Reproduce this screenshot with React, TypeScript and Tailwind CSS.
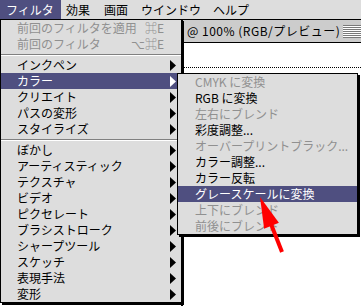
import React from 'react'

type Item =
  | { kind: 'sep' }
  | { kind: 'item'; label: string; disabled?: boolean; active?: boolean; sub?: boolean; key?: string }

const filterMenu: Item[] = [
  { kind: 'item', label: '前回のフィルタを適用', disabled: true, key: '⌘E' },
  { kind: 'item', label: '前回のフィルタ', disabled: true, key: '⌥⌘E' },
  { kind: 'sep' },
  { kind: 'item', label: 'インクペン', sub: true },
  { kind: 'item', label: 'カラー', sub: true, active: true },
  { kind: 'item', label: 'クリエイト', sub: true },
  { kind: 'item', label: 'パスの変形', sub: true },
  { kind: 'item', label: 'スタイライズ', sub: true },
  { kind: 'sep' },
  { kind: 'item', label: 'ぼかし', sub: true },
  { kind: 'item', label: 'アーティスティック', sub: true },
  { kind: 'item', label: 'テクスチャ', sub: true },
  { kind: 'item', label: 'ビデオ', sub: true },
  { kind: 'item', label: 'ピクセレート', sub: true },
  { kind: 'item', label: 'ブラシストローク', sub: true },
  { kind: 'item', label: 'シャープツール', sub: true },
  { kind: 'item', label: 'スケッチ', sub: true },
  { kind: 'item', label: '表現手法', sub: true },
  { kind: 'item', label: '変形', sub: true },
]

const colorMenu: Item[] = [
  { kind: 'item', label: 'CMYK に変換', disabled: true },
  { kind: 'item', label: 'RGB に変換' },
  { kind: 'item', label: '左右にブレンド', disabled: true },
  { kind: 'item', label: '彩度調整...' },
  { kind: 'item', label: 'オーバープリントブラック...', disabled: true },
  { kind: 'item', label: 'カラー調整...' },
  { kind: 'item', label: 'カラー反転' },
  { kind: 'item', label: 'グレースケールに変換', active: true },
  { kind: 'item', label: '上下にブレンド', disabled: true },
  { kind: 'item', label: '前後にブレンド', disabled: true },
]

function Arrow({ white }: { white?: boolean }) {
  return (
    <svg width="6" height="11" viewBox="0 0 6 11" className="ml-auto mr-[5px] shrink-0">
      <polygon points="0,0 6,5.5 0,11" fill={white ? '#fff' : '#000'} />
    </svg>
  )
}

function MenuRows({ items, pad }: { items: Item[]; pad: string }) {
  return (
    <>
      {items.map((it, i) => {
        if (it.kind === 'sep') {
          return (
            <div key={i} className="flex h-[5px] flex-col justify-center">
              <div className="h-px bg-[#808080]" />
              <div className="h-px bg-white" />
            </div>
          )
        }
        const color = it.active ? 'bg-[#4f4f80] text-white' : it.disabled ? 'text-[#909090]' : 'text-black'
        return (
          <div key={i} className={`flex h-[16px] items-center whitespace-nowrap ${pad} ${color}`}>
            <span>{it.label}</span>
            {it.key && <span className="ml-auto mr-[17px]">{it.key}</span>}
            {it.sub && <Arrow white={it.active} />}
          </div>
        )
      })}
    </>
  )
}

export default function App() {
  return (
    <div className="relative h-[306px] w-[361px] overflow-hidden bg-white font-['Noto_Sans_CJK_JP','Noto_Sans',sans-serif] text-[12px] leading-none">
      {/* menu bar */}
      <div className="flex h-[19px] items-center bg-[#dddddd] text-black">
        <div className="flex h-full w-[61px] items-center bg-[#4f4f80] pl-[6px] text-white">フィルタ</div>
        <span className="ml-[5px]">効果</span>
        <span className="ml-[14px]">画面</span>
        <span className="ml-[13px]">ウインドウ</span>
        <span className="ml-[12px]">ヘルプ</span>
      </div>

      {/* document window behind the menus */}
      <div className="ml-[181px] h-[287px] border-l-2 border-t border-black bg-white">
        <div className="flex h-[23px] items-center border-b border-black bg-[#cccccc] pl-[4px]">
          <span className="whitespace-nowrap tracking-[0.5px]">@ 100% (RGB/プレビュー)</span>
          <div className="ml-auto h-[13px] w-[18px] bg-[repeating-linear-gradient(to_bottom,#7a7a7a_0px,#7a7a7a_1px,#ffffff_1px,#ffffff_2px)]" />
        </div>
        <div className="mt-[24px] border-b border-dotted border-black" />
      </div>

      {/* Filter dropdown */}
      <div className="absolute left-0 top-[19px] w-[182px] border border-black bg-[#dddddd] shadow-[2px_2px_0_#000]">
        <MenuRows items={filterMenu} pad="pl-[16px]" />
      </div>

      {/* Color submenu */}
      <div className="absolute left-[177px] top-[73px] w-[181px] border border-black bg-[#dddddd] shadow-[2px_2px_0_#000]">
        <MenuRows items={colorMenu} pad="pl-[17px]" />
      </div>

      {/* red pointer */}
      <svg className="absolute left-[250px] top-[190px]" width="40" height="70" viewBox="0 0 40 70">
        <line x1="21" y1="34" x2="32" y2="62" stroke="#ff0000" strokeWidth="4" />
        <polygon points="10,7 28.9,32.8 14.1,38.8" fill="#ff0000" />
      </svg>
    </div>
  )
}
